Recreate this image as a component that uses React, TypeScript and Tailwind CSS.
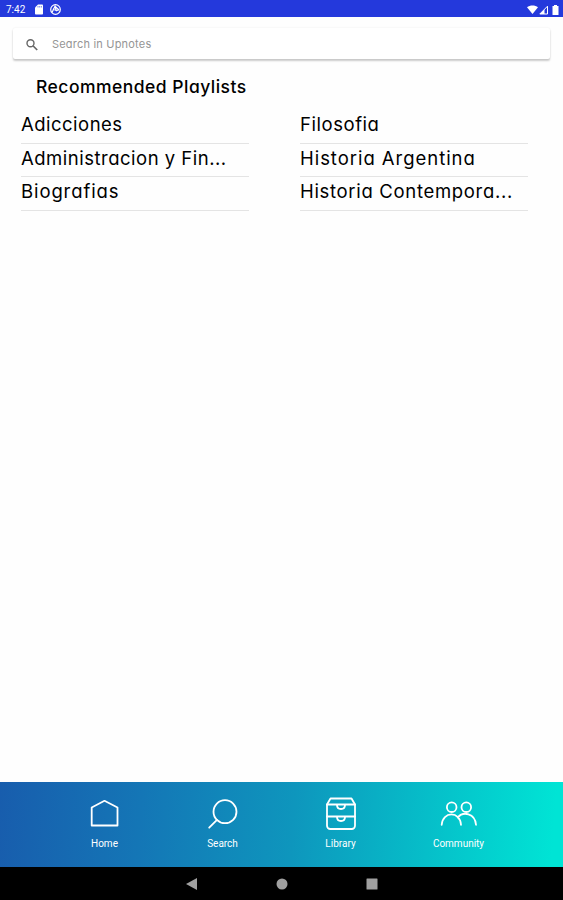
const playlists = [
  [
    { title: 'Adicciones', tracking: 'tracking-[0.48px]' },
    { title: 'Administracion y Fin...', tracking: 'tracking-[0.5px]' },
    { title: 'Biografias', tracking: 'tracking-[0.9px]' },
  ],
  [
    { title: 'Filosofia', tracking: 'tracking-[0.55px]' },
    { title: 'Historia Argentina', tracking: 'tracking-[0.96px]' },
    { title: 'Historia Contempora...', tracking: 'tracking-[0.68px]' },
  ],
]

const HomeIcon = () => (
  <path d="M4.7 10.5 17.500 3.800l13 6.700v18H4.700z" />
)

const SearchIcon = () => (
  <>
    <circle cx="20" cy="14.700" r="11.500" />
    <path d="m12 22.900-7.800 7.800" />
  </>
)

const LibraryIcon = () => (
  <>
    <path d="M7.5 1.500h21l3.500 6v21.200a3.300 3.300 0 0 1-3.300 3.300H7.300A3.300 3.300 0 0 1 4 28.700V7.500z" />
    <path d="M4 7.500h28M4 19.500h28" />
    <path d="M14 8c0 5.300 8 5.300 8 0M14 20c0 5.300 8 5.300 8 0" />
  </>
)

const CommunityIcon = () => (
  <>
    <circle cx="10.700" cy="10.200" r="4.800" />
    <circle cx="25.300" cy="10.200" r="4.800" />
    <path d="M.700 27.800C1.500 14 19.400 14 20 27.800M16.700 20.500C22 14.200 34 15.800 35 27.800" />
  </>
)

const navItems = [
  { label: 'Home', icon: HomeIcon },
  { label: 'Search', icon: SearchIcon },
  { label: 'Library', icon: LibraryIcon },
  { label: 'Community', icon: CommunityIcon },
]

const StatusBar = () => (
  <div className="flex h-[17px] shrink-0 items-center justify-between bg-[#2439dc] pl-[6px] pr-[4px] pt-[2px] text-white">
    <div className="flex items-center">
      <span className="w-[29px] font-[Roboto,sans-serif] text-[10px] leading-none">7:42</span>
      <svg className="h-[11px] w-[8px]" viewBox="0 0 8 11" fill="currentColor">
        <path d="M3 .5h4.200a.8.8 0 0 1 .8.8v8.400a.8.8 0 0 1-.8.8H.8a.8.8 0 0 1-.8-.8V3.500z" />
        <path d="M3 2v1.500M4.700 2v1.500M6.400 2v1.500" stroke="#2439dc" strokeWidth=".6" />
      </svg>
      <svg className="ml-[7px] h-[11px] w-[11px]" viewBox="0 0 11 11" fill="none" stroke="currentColor">
        <circle cx="5.500" cy="5.500" r="4.800" strokeWidth="1.200" />
        <path d="M2 8.500 5 2.300l1.200 4.200L2.800 5M5 2.300 9 6M6.200 6.500l2.500-.3" strokeWidth="1.200" />
      </svg>
    </div>
    <div className="flex items-center">
      <svg className="h-[10px] w-[11px]" viewBox="0 0 11 10" fill="currentColor">
        <path d="M0 2.200C3-.2 8-.2 11 2.200L5.500 9z" />
      </svg>
      <svg className="ml-px h-[10px] w-[9px]" viewBox="0 0 9 10">
        <path d="M.8 9 8.500 1.200V9z" fill="none" stroke="currentColor" strokeWidth="1" />
        <path d="M.8 9 5.500 4.200V9z" fill="currentColor" />
      </svg>
      <svg className="ml-[4px] h-[10px] w-[7px]" viewBox="0 0 7 10" fill="currentColor">
        <path d="M2 0h3v1h1.500v9h-6V1H2z" />
      </svg>
    </div>
  </div>
)

export default function App() {
  return (
    <div className="flex h-[900px] w-[563px] flex-col overflow-hidden bg-white font-[Inter,sans-serif] text-black [font-feature-settings:'cv11']">
      <StatusBar />

      <main className="flex-1 bg-[#fefefe]">
        <div className="mx-[13px] mt-[11px] flex h-[31px] items-center rounded-[2px] bg-white pl-[12px] shadow-[0_2px_2px_rgba(0,0,0,0.2),0_0_2px_rgba(0,0,0,0.08)]">
          <svg className="mt-[2px] h-[14px] w-[14px]" viewBox="0 0 14 14" fill="none" stroke="#666">
            <circle cx="5.500" cy="5.300" r="3.500" strokeWidth="1.400" />
            <path d="m8.200 8 4 4" strokeWidth="1.700" />
          </svg>
          <span className="ml-[13px] mt-[2px] text-[11px] tracking-[0.2px] text-[#959595]">Search in Upnotes</span>
        </div>

        <h1 className="ml-[36px] mt-[16px] h-[25px] whitespace-nowrap text-[17.500px] font-medium leading-[24px] tracking-[0.48px]">
          Recommended Playlists
        </h1>

        <div className="ml-[21px] mt-[10px] flex gap-[51px]">
          {playlists.map((column, i) => (
            <ul key={i} className="w-[228px]">
              {column.map((item) => (
                <li
                  key={item.title}
                  className={`h-[33.500px] whitespace-nowrap border-b border-[#e4e4e4] text-[18.500px] leading-[28px] ${item.tracking}`}
                >
                  {item.title}
                </li>
              ))}
            </ul>
          ))}
        </div>
      </main>

      <nav className="grid h-[85px] shrink-0 grid-cols-4 bg-[linear-gradient(94deg,#185dad_0%,#1476b6_25%,#0e96bd_52%,#07b8c7_72%,#00e4d5_98%)] pl-[45.500px] pr-[45.500px] pt-[15px]">
        {navItems.map((item) => {
          const Icon = item.icon
          return (
            <div key={item.label} className="flex flex-col items-center text-white">
              <svg
                className="h-[36px] w-[36px] overflow-visible"
                viewBox="0 0 36 36"
                fill="none"
                stroke="currentColor"
                strokeWidth="1.800"
                strokeLinecap="round"
                strokeLinejoin="round"
              >
                <Icon />
              </svg>
              <span className="mt-[5px] font-[Roboto,sans-serif] text-[10px] leading-[12px]">{item.label}</span>
            </div>
          )
        })}
      </nav>

      <div className="flex h-[33px] shrink-0 items-center justify-center gap-[78px] bg-black text-[#a0a0a0]">
        <svg className="h-[12px] w-[12px]" viewBox="0 0 12 12" fill="currentColor">
          <path d="M0 6 11 0v12z" />
        </svg>
        <svg className="h-[12px] w-[12px]" viewBox="0 0 12 12" fill="currentColor">
          <circle cx="6" cy="6" r="5.500" />
        </svg>
        <svg className="h-[12px] w-[12px]" viewBox="0 0 12 12" fill="currentColor">
          <rect x=".5" y=".5" width="11" height="11" rx=".5" />
        </svg>
      </div>
    </div>
  )
}
